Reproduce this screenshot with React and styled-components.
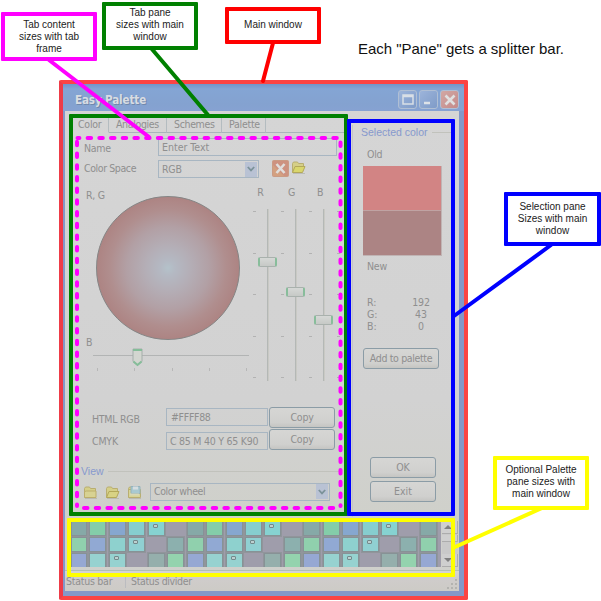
import React from 'react';
import styled, { createGlobalStyle } from 'styled-components';

const Global = createGlobalStyle`
  * { box-sizing: border-box; }
  body { margin: 0; background: #fff; overflow: hidden; }
`;

const Page = styled.main`
  position: relative;
  width: 601px;
  height: 601px;
  padding: 80px 0 0 59px;
  background: #fff;
  overflow: hidden;
  font-family: 'DejaVu Sans Condensed', 'DejaVu Sans', sans-serif;
  font-stretch: condensed;
  font-size: 10.5px;
  letter-spacing: -0.25px;
  color: #8f8f8f;
`;

const Window = styled.section`
  display: flex;
  flex-direction: column;
  width: 409px;
  height: 520px;
  border: 4px solid #fb4444;
  border-left-color: #ee3c48;
  border-radius: 2px;
`;

const TitleBar = styled.header`
  display: flex;
  align-items: center;
  justify-content: space-between;
  height: 27px;
  padding: 4px 5px 0 12px;
  background: linear-gradient(#7195ca, #84a5d4 5px, #84a2d0 20px, #86a2d2);
`;

const Title = styled.h1`
  margin: 0;
  font-family: 'DejaVu Sans', sans-serif;
  font-stretch: condensed;
  font-size: 11.5px;
  font-weight: bold;
  letter-spacing: -0.1px;
  color: #d8dce2;
  text-shadow: 1px 1px #7088ac;
`;

const TitleButtons = styled.div`
  display: flex;
  gap: 2px;
`;

const TitleButton = styled.div`
  display: grid;
  place-items: center;
  width: 19px;
  height: 19px;
  border: 1px solid #b0bfd4;
  border-radius: 3px;
  background: ${(p) => (p.$close ? 'linear-gradient(135deg, #d2a8a4, #c48a8a)' : 'linear-gradient(135deg, #9cb4da, #7f9bc8)')};
`;

const Body = styled.div`
  display: flex;
  flex-direction: column;
  flex: 1;
  border: solid #8498c8;
  border-width: 0 5px 5px 2px;
  background: linear-gradient(#d5d5d5, #d2d2d2 60%, #cfd0ca 85%, #d0d0cc);
`;

const Panes = styled.div`
  display: grid;
  grid-template-columns: 283px 1fr;
  height: 406px;
`;

const TabPane = styled.div`
  padding: 5px 4px 0 6px;
`;

const TabStrip = styled.div`
  display: flex;
  height: 17px;
`;

const Tab = styled.div`
  width: ${(p) => p.$w}px;
  padding-left: 7px;
  line-height: 17px;
  letter-spacing: ${(p) => p.$ls || 0}px;
  white-space: nowrap;
  border-right: 1px solid #b4bcc0;
  border-bottom: 1px solid ${(p) => (p.$active ? 'transparent' : '#a9b4ba')};
`;

const TabFill = styled.div`
  flex: 1;
  border-bottom: 1px solid #a9b4ba;
`;

const Form = styled.div`
  padding: 5px 0 0 13px;
`;

const Field = styled.div`
  display: grid;
  grid-template-columns: 74px ${(p) => p.$w}px 1fr;
  height: 18px;
  margin-bottom: 4px;
`;

const Label = styled.span`
  line-height: ${(p) => p.$lh || 18}px;
  letter-spacing: ${(p) => p.$ls || 0}px;
  white-space: nowrap;
`;

const Input = styled.div`
  display: flex;
  align-items: center;
  justify-content: space-between;
  height: 18px;
  padding: 0 1px 1px ${(p) => p.$pad || 3}px;
  border: 1px solid #a8b6c2;
  letter-spacing: ${(p) => p.$ls || 0}px;
  white-space: nowrap;
`;

const DropArrow = styled.div`
  display: grid;
  place-items: center;
  width: 12px;
  height: 15px;
  margin-top: 1px;
  background: #b9c2d4;
`;

const FieldIcons = styled.div`
  display: flex;
  gap: 2px;
  padding-left: 13px;
`;

const Mixer = styled.div`
  display: grid;
  grid-template-columns: 164px 1fr;
  height: 225px;
`;

const WheelSide = styled.div`
  padding-top: 6px;
`;

const AxisLabel = styled.div`
  height: 8px;
  padding-left: 2px;
  line-height: 14px;
`;

const Wheel = styled.div`
  width: 144px;
  height: 144px;
  margin-left: 12px;
  border: 1px solid #858585;
  border-radius: 50%;
  background: radial-gradient(circle closest-side, #b4c2ca 0, #b4b9c3 10%, #b4aeb6 32%, #b2a0a5 58%, #b08e8e 82%, #ad8483 100%);
`;

const LowerAxis = styled.div`
  height: 14px;
  margin-top: -5px;
  padding-left: 2px;
  line-height: 14px;
`;

const BrightSlider = styled.div`
  display: flex;
  flex-direction: column;
  justify-content: space-between;
  position: relative;
  width: 156px;
  height: 16px;
  margin: 6px 0 0 9px;
  border-top: 1px solid #b2b4b4;
`;

const TickRow = styled.div`
  display: flex;
  justify-content: space-between;
  margin: 12px 2px 0 4px;
`;

const VTick = styled.i`
  width: 1px;
  height: 3px;
  background: #b7b7b7;
`;

const BrightThumb = styled.svg`
  position: absolute;
  left: 39px;
  top: -8px;
`;

const ChannelSide = styled.div`
  padding-top: 4px;
`;

const ChannelNames = styled.div`
  display: grid;
  grid-template-columns: 25px 37px 20px;
  text-align: center;
  line-height: 13px;
`;

const Channels = styled.div`
  display: flex;
  margin: 10px 0 0 4px;
`;

const Channel = styled.div`
  position: relative;
  width: 28px;
  height: 172px;
  background: linear-gradient(90deg, #b4b8b6 0 1px, #c9c9c4 1px) 15px 0 / 2px 100% no-repeat;
`;

const Ticks = styled.div`
  display: flex;
  flex-direction: column;
  justify-content: space-between;
  width: 3px;
  height: 167px;
  margin: 2px 0 0 1px;
`;

const HTick = styled.i`
  height: 1px;
  background: #b2b2b2;
`;

const ChannelThumb = styled.div`
  position: absolute;
  left: 6px;
  top: ${(p) => p.$top}px;
  width: 19px;
  height: 10px;
  border: 1px solid #a9b1ad;
  border-left: 2px solid #88bd9b;
  border-right: 2px solid #88bd9b;
  border-radius: 2px;
  background: linear-gradient(#d6d8d6, #c6c9c6);
`;

const CodeRow = styled.div`
  display: grid;
  grid-template-columns: 74px 101px 66px;
  height: 21px;
  margin: 0 0 1px 8px;
`;

const CodeInput = styled(Input)`
  margin-top: ${(p) => p.$top}px;
  width: 102px;
`;

const Button = styled.div`
  display: flex;
  align-items: center;
  justify-content: center;
  width: ${(p) => p.$w}px;
  height: 21px;
  margin-left: ${(p) => p.$ml || 0}px;
  padding-bottom: 2px;
  border: 1px solid #8b9ca6;
  border-radius: 3px;
  background: linear-gradient(#d6d6d4, #d0d0ce 75%, #c5c5c2);
  letter-spacing: ${(p) => p.$ls || 0}px;
  white-space: nowrap;
`;

const Legend = styled.div`
  display: flex;
  align-items: center;
  gap: 4px;
  height: 14px;
  font-family: 'Liberation Sans', Arial, sans-serif;
  font-size: 10.5px;
  letter-spacing: 0;
  color: #8799cd;
  white-space: nowrap;
  &::after {
    content: '';
    flex: 1;
    height: 1px;
    background: #c1c2bc;
  }
`;

const ViewLegend = styled(Legend)`
  margin: 14px 4px 0 -3px;
`;

const ViewRow = styled.div`
  display: grid;
  grid-template-columns: 22px 22px 23px 180px;
  align-items: center;
  height: 19px;
  margin: 4px 0 0 -1px;
`;

const SelectionPane = styled.div`
  display: flex;
  flex-direction: column;
  margin: 14px 4px 0 4px;
  padding: 0 0 0 8px;
  border-left: 1px solid #c6c6c4;
`;

const Caption = styled.div`
  height: 14px;
  margin-top: ${(p) => p.$mt}px;
  padding-left: 6px;
  line-height: 14px;
`;

const Swatches = styled.div`
  display: grid;
  grid-template-rows: 44px 45px;
  width: 79px;
  margin: 5px 0 0 2px;
  border: 1px solid #c0b4b4;
  border-width: 0 1px 1px 0;
`;

const Swatch = styled.div`
  background: ${(p) => p.$color};
  border-top: 1px solid ${(p) => p.$edge};
`;

const Values = styled.dl`
  display: grid;
  grid-template-columns: 30px 48px;
  grid-auto-rows: 12px;
  margin: 23px 0 0 6px;
  line-height: 12px;
  letter-spacing: -0.1px;
  & dt, & dd { margin: 0; }
  & dd { text-align: center; }
`;

const Actions = styled.div`
  display: flex;
  flex-direction: column;
  gap: ${(p) => p.$gap}px;
  margin: ${(p) => p.$mt}px 0 0 2px;
`;

const PalettePane = styled.div`
  display: flex;
  height: 52px;
  padding: 4px 0 2px 6px;
`;

const Cells = styled.div`
  display: grid;
  grid-template-columns: 16px repeat(18, 17px);
  grid-auto-rows: 15px;
  column-gap: 2.45px;
  row-gap: 1px;
  width: 370px;
  height: 46px;
  overflow: hidden;
  background: #9f9dab;
`;

const Cell = styled.div`
  padding: 2px 0 0 4px;
  ${(p) => p.$color && `background: ${p.$color}; border: 1px solid #879296; outline: 0.5px solid #91959b;`}
`;

const Mark = styled.div`
  width: 5px;
  height: 4px;
  border: 1px solid #74898b;
  border-radius: 1px;
  background: #bcd0d0;
`;

const ScrollBar = styled.div`
  display: flex;
  flex-direction: column;
  width: 16px;
  height: 46px;
  margin-left: 1px;
  background: #c9c9c9;
`;

const ScrollPart = styled.div`
  display: grid;
  align-items: center;
  height: ${(p) => p.$h}px;
  margin-top: ${(p) => p.$mt || 0}px;
  padding-left: 2px;
  border: solid #acacac;
  border-width: 0 1px 1px 0;
  background: #cfcfcf;
`;

const StatusBar = styled.footer`
  display: flex;
  flex: 1;
  align-items: flex-start;
  margin-top: 1px;
  padding: 4px 0 0 1px;
  border-top: 1px solid #afc0b4;
  line-height: 13px;
  background: linear-gradient(#d4d4d4, #cfcccb 8px, #cdcbc6);
`;

const StatusCell = styled.span`
  width: ${(p) => p.$w}px;
  height: 13px;
  padding-left: ${(p) => p.$pad || 0}px;
  letter-spacing: ${(p) => p.$ls || 0}px;
  white-space: nowrap;
  border-right: ${(p) => (p.$divider ? '1px solid #bbbcc0' : '0')};
`;

const Grip = styled.svg`
  margin: 4px 1px 0 auto;
`;

const Outline = styled.div`
  position: absolute;
  left: ${(p) => p.$x}px;
  top: ${(p) => p.$y}px;
  width: ${(p) => p.$w}px;
  height: ${(p) => p.$h}px;
  border: 4px solid ${(p) => p.$color};
  border-radius: 1px;
`;

const Callout = styled(Outline)`
  padding-top: ${(p) => p.$pad}px;
  background: #fff;
  color: #222;
  font: 10px/12px 'Liberation Sans', Arial, sans-serif;
  letter-spacing: 0;
  text-align: center;
  white-space: pre;
`;

const Note = styled.p`
  position: absolute;
  left: 358px;
  top: 39px;
  margin: 0;
  color: #111;
  font: 15px/20px 'Liberation Sans', Arial, sans-serif;
  letter-spacing: -0.02px;
  white-space: nowrap;
`;

const Connectors = styled.svg`
  position: absolute;
  left: 0;
  top: 0;
`;

function Chevron() {
  return (
    <svg width="8" height="6" viewBox="0 0 8 6">
      <path d="M.8 1 4 4.4 7.2 1" fill="none" stroke="#7b9299" strokeWidth="1.8" />
    </svg>
  );
}

function FolderIcon({ kind }) {
  return (
    <svg width="15" height="14" viewBox="0 0 15 14">
      <path d="M1.5 12.5v-9l1-1.5h4l1 1.5h5v3" fill="#d5cf88" stroke="#b9ae70" />
      {kind === 'closed' && <path d="M1.5 12.5v-6l2-.5h9.500v6.500z" fill="#d8d292" stroke="#bcae6c" />}
      {kind !== 'closed' && kind !== 'save' && (
        <path d="M1.5 12.5 4 6.5h10l-2.5 6z" fill={kind === 'bright' ? '#d9d66c' : '#d8d284'} stroke="#b3a85a" />
      )}
      {kind === 'save' && (
        <>
          <path d="M1.5 12.5v-8h12v8z" fill="#d8d496" stroke="#b9ae70" />
          <path d="M4 1.5h9v7H4z" fill="#a9c9d0" stroke="#96b2bc" />
          <path d="M6 1.5h5v3H6z" fill="#d6dde0" />
          <path d="M3 9.5h9" stroke="#d9d8b5" strokeWidth="2" />
        </>
      )}
      <path d="M2 13.500h12" stroke="#b0b0a8" strokeWidth=".7" />
    </svg>
  );
}

function DeleteIcon() {
  return (
    <svg width="17" height="17" viewBox="0 0 17 17">
      <rect x=".5" y=".5" width="16" height="16" rx="1" fill="#cd9280" stroke="#ca9b84" />
      <path d="M1 16V5l11 11z" fill="#d3a080" />
      <path d="m4.5 4 8 9m0-9-8 9" stroke="#e0dedc" strokeWidth="2.600" />
    </svg>
  );
}

const PALETTE = [
  ['#86a9a7', '#84cda9', '#86a7cf', '#86cecf', '#86d2d1', null],
  ['#8cb0ae', '#90d0ad', '#91a9d3', '#8ed1ce', '#90d0d2', null],
  ['#95afac', '#94d3ae', '#96a8d3', '#97d2d0', '#96d2d0', null],
];

const Range = ({ n, children }) => Array.from({ length: n }, (_, i) => <React.Fragment key={i}>{children}</React.Fragment>);

function PaletteGrid() {
  return (
    <Cells>
      {PALETTE.flatMap((row, r) =>
        Array.from({ length: 19 }, (_, c) => {
          const i = (c + r) % 6;
          return <Cell key={`${r}-${c}`} $color={row[i]}>{i === 4 && <Mark />}</Cell>;
        })
      )}
    </Cells>
  );
}

function ColorTab() {
  return (
    <TabPane>
      <TabStrip>
        <Tab $w={38} $ls={-0.25} $active>Color</Tab>
        <Tab $w={58} $ls={-0.35}>Analogies</Tab>
        <Tab $w={55} $ls={-0.35}>Schemes</Tab>
        <Tab $w={44} $ls={-0.25}>Palette</Tab>
        <TabFill />
      </TabStrip>
      <Form>
        <Field $w={179}>
          <Label $lh={21} $ls={-0.3}>Name</Label>
          <Input>Enter Text</Input>
        </Field>
        <Field $w={101}>
          <Label $lh={16} $ls={-0.4}>Color Space</Label>
          <Input $ls={-0.2}>RGB<DropArrow><Chevron /></DropArrow></Input>
          <FieldIcons><DeleteIcon /><FolderIcon kind="bright" /></FieldIcons>
        </Field>
        <Mixer>
          <WheelSide>
            <AxisLabel>R, G</AxisLabel>
            <Wheel />
            <LowerAxis>B</LowerAxis>
            <BrightSlider>
              <TickRow><Range n={5}><VTick /></Range></TickRow>
              <BrightThumb width="11" height="19" viewBox="0 0 11 19">
                <path d="M1 1h9v12.500L5.500 17.500 1 13.500z" fill="#d3d6d0" stroke="#a4aeaa" />
                <path d="M1 2h9M1.500 13.500l4 3.500 4-3.500" fill="none" stroke="#85bd99" strokeWidth="2" />
              </BrightThumb>
            </BrightSlider>
          </WheelSide>
          <ChannelSide>
            <ChannelNames><span>R</span><span>G</span><span>B</span></ChannelNames>
            <Channels>
              {[48, 78, 106].map((top) => (
                <Channel key={top}>
                  <Ticks><Range n={5}><HTick /></Range></Ticks>
                  <ChannelThumb $top={top} />
                </Channel>
              ))}
              <Ticks><Range n={5}><HTick /></Range></Ticks>
            </Channels>
          </ChannelSide>
        </Mixer>
        <CodeRow>
          <Label $lh={24} $ls={-0.25}>HTML RGB</Label>
          <CodeInput $top={1} $pad={4} $ls={-0.3}>#FFFF88</CodeInput>
          <Button $w={66} $ml={2} $ls={-0.25}>Copy</Button>
        </CodeRow>
        <CodeRow>
          <Label $lh={24} $ls={-0.2}>CMYK</Label>
          <CodeInput $top={3} $pad={3} $ls={-0.25}>C 85 M 40 Y 65 K90</CodeInput>
          <Button $w={66} $ml={2} $ls={-0.25}>Copy</Button>
        </CodeRow>
        <ViewLegend>View</ViewLegend>
        <ViewRow>
          <FolderIcon kind="closed" />
          <FolderIcon />
          <FolderIcon kind="save" />
          <Input $ls={-0.4}>Color wheel<DropArrow><Chevron /></DropArrow></Input>
        </ViewRow>
      </Form>
    </TabPane>
  );
}

function Selection() {
  return (
    <SelectionPane>
      <Legend>Selected color</Legend>
      <Caption $mt={8}>Old</Caption>
      <Swatches>
        <Swatch $color="#d28484" $edge="#d28484" />
        <Swatch $color="#ac8484" $edge="#c0a3a3" />
      </Swatches>
      <Caption $mt={3}>New</Caption>
      <Values>
        <dt>R:</dt><dd>192</dd>
        <dt>G:</dt><dd>43</dd>
        <dt>B:</dt><dd>0</dd>
      </Values>
      <Actions $mt={16}><Button $w={76} $ls={-0.35}>Add to palette</Button></Actions>
      <Actions $mt={88} $gap={3}>
        <Button $w={66} $ml={7}>OK</Button>
        <Button $w={66} $ml={7}>Exit</Button>
      </Actions>
    </SelectionPane>
  );
}

export default function App() {
  return (
    <Page>
      <Global />
      <Window>
        <TitleBar>
          <Title>Easy Palette</Title>
          <TitleButtons>
            <TitleButton>
              <svg width="12" height="11" viewBox="0 0 12 11"><path d="M1 1h10v9H1zM1 2.500h10" fill="none" stroke="#d9dfe6" strokeWidth="1.500" /></svg>
            </TitleButton>
            <TitleButton>
              <svg width="12" height="11" viewBox="0 0 12 11"><path d="M1 9h6" stroke="#dde2e8" strokeWidth="2.500" /></svg>
            </TitleButton>
            <TitleButton $close>
              <svg width="12" height="12" viewBox="0 0 12 12"><path d="m1.500 1.500 9 9m0-9-9 9" stroke="#e0e0e0" strokeWidth="2.600" /></svg>
            </TitleButton>
          </TitleButtons>
        </TitleBar>
        <Body>
          <Panes>
            <ColorTab />
            <Selection />
          </Panes>
          <PalettePane>
            <PaletteGrid />
            <ScrollBar>
              <ScrollPart $h={13}><svg width="8" height="4"><path d="M0 4 4 0l4 4z" fill="#808080" /></svg></ScrollPart>
              <ScrollPart $h={7} $mt={1} />
              <ScrollPart $h={13} $mt={12}><svg width="8" height="4"><path d="M0 0h8L4 4z" fill="#808080" /></svg></ScrollPart>
            </ScrollBar>
          </PalettePane>
          <StatusBar>
            <StatusCell $w={60} $ls={-0.25} $divider>Status bar</StatusCell>
            <StatusCell $w={80} $pad={5} $ls={-0.35}>Status divider</StatusCell>
            <Grip width="11" height="11" viewBox="0 0 11 11">
              <path d="M8 1h2M8 5h2M8 9h2M4 5h2M4 9h2M0 9h2" stroke="#b3b3b0" strokeWidth="2" />
            </Grip>
          </StatusBar>
        </Body>
      </Window>

      <Outline $x={69} $y={114} $w={279} $h={402} $color="#008000" />
      <Outline $x={347} $y={119} $w={108} $h={397} $color="#0000ff" />
      <Outline $x={67} $y={518} $w={388} $h={59} $color="#ffff00" />

      <Callout $x={1} $y={12} $w={96} $h={49} $pad={3} $color="#ff00ff">{'Tab content\nsizes with tab\nframe'}</Callout>
      <Callout $x={102} $y={2} $w={96} $h={48} $pad={1} $color="#008000">{'Tab pane\nsizes with main\nwindow'}</Callout>
      <Callout $x={225} $y={7} $w={96} $h={37} $pad={8} $color="#ff0000">Main window</Callout>
      <Callout $x={504} $y={192} $w={97} $h={54} $pad={5} $color="#0000ff">{'Selection pane\nSizes with main\nwindow'}</Callout>
      <Callout $x={493} $y={456} $w={96} $h={54} $pad={4} $color="#ffff00">{'Optional Palette\npane sizes with\nmain window'}</Callout>
      <Note>Each "Pane" gets a splitter bar.</Note>

      <Connectors width="601" height="601" fill="none" strokeWidth="4" strokeLinecap="round">
        <g stroke="#ff00ff">
          <path d="M49 60 149 137" />
          <g strokeDasharray="3.500 8.200">
            <path d="M77.500 138H340" strokeDashoffset="1.600" />
            <path d="M77 141.800V506" />
            <path d="M340.500 142.500V506" />
            <path d="M84 508H339" />
          </g>
        </g>
        <path d="M151 48 208 115" stroke="#008000" />
        <path d="M273 43 263 81" stroke="#ff0000" />
        <path d="M551 245 454 316" stroke="#0000ff" />
        <path d="M542 508 455 547" stroke="#ffff00" />
      </Connectors>
    </Page>
  );
}
